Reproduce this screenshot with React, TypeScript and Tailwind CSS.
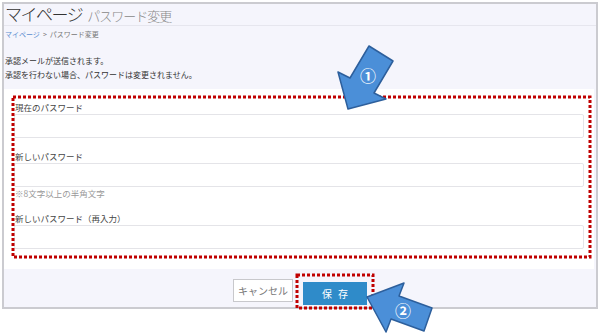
import type { ReactNode } from 'react';

const JP = "font-['Noto_Sans_CJK_JP','Noto_Sans',sans-serif]";

// red dotted annotation frame drawn over its parent
function DottedFrame({ className }: { className: string }) {
  return (
    <svg className={`absolute pointer-events-none overflow-visible ${className}`}>
      <rect x="0" y="0" width="100%" height="100%" fill="none" stroke="#c00000" strokeWidth="3" strokeDasharray="3 2" />
    </svg>
  );
}

function Field({ label, pad, children }: { label: string; pad: string; children?: ReactNode }) {
  return (
    <>
      <div className={`pl-[1px] text-[8.5px] leading-[12px] text-[#444] ${pad}`}>{label}</div>
      <div className="h-[24px] rounded-[2px] border border-[#e4e4e8] bg-white" />
      {children}
    </>
  );
}

export default function App() {
  return (
    <div className={`relative w-[600px] h-[333px] overflow-hidden bg-white ${JP}`}>
      <div className="ml-[2px] mt-[2px] w-[596px] h-[307px] border-2 border-[#cbcbd0] bg-[#f5f5fc] flex flex-col">
        {/* Title */}
        <div className="h-[22px] border-b border-[#e6e6ee] pl-[1px] flex items-baseline gap-[5px]">
          <span className="text-[17px] leading-[19px] tracking-[-1.5px] font-light text-[#333]">マイページ</span>
          <span className="text-[13px] leading-[19px] tracking-[-1px] font-light text-[#888]">パスワード変更</span>
        </div>

        {/* Breadcrumb */}
        <div className="mt-[3px] pl-[1px] text-[7px] leading-[10px] text-[#777]">
          <span className="text-[#5b8ed0]">マイページ</span>
          <span className="mx-[3px]">&gt;</span>
          <span>パスワード変更</span>
        </div>

        <div className="mt-[15px] pl-[1px] text-[8px] leading-[14px] text-[#333]">
          <p>承認メールが送信されます。</p>
          <p>承認を行わない場合、パスワードは変更されません。</p>
        </div>

        {/* Form panel */}
        <div className="mt-[7px] mr-[2px] bg-white pt-[6px] pb-[11px] pl-[7px] pr-[3px]">
          <div className="relative p-[3px]">
            <DottedFrame className="inset-[1.5px] w-[calc(100%-3px)] h-[calc(100%-3px)]" />
            <div className="pr-[4px] pb-[6px] flex flex-col">
              <Field label="現在のパスワード" pad="pt-[3px] pb-[1px]" />
              <Field label="新しいパスワード" pad="pt-[12px] pb-[1px]">
                <div className="pl-[1px] text-[8.5px] leading-[12px] text-[#999]">※8文字以上の半角文字</div>
              </Field>
              <Field label="新しいパスワード（再入力）" pad="pt-[13px] pb-[1px]" />
            </div>
          </div>
        </div>

        {/* Buttons */}
        <div className="pt-[10px] flex justify-center gap-[10px]">
          <button className="w-[60px] h-[23px] border border-[#c8c8cc] bg-white text-[10px] text-[#777]">キャンセル</button>
          <span className="relative">
            <button className="w-[64px] h-[23px] bg-[#2f8bc9] text-[10px] text-white tracking-[6px] pl-[6px]">保存</button>
            <DottedFrame className="-left-[6.5px] -top-[4.5px] w-[76px] h-[33px]" />
          </span>
        </div>
      </div>

      {/* Callout arrows */}
      <svg className="absolute inset-0 pointer-events-none" width="600" height="333">
        <polygon
          points="369,46 393,61 374,93 386,99 348,109 338,72 350,78"
          fill="#4b8fd8"
          stroke="#2d5f9c"
          strokeWidth="1.5"
          strokeLinejoin="round"
        />
        <text x="368" y="75" fill="white" fontSize="16" fontWeight="bold" textAnchor="middle" dominantBaseline="central" fontFamily="Noto Sans CJK JP">①</text>
        <polygon
          points="367,297 404,283 399,296 432,308 424,331 391,319 386,332"
          fill="#4b8fd8"
          stroke="#2d5f9c"
          strokeWidth="1.5"
          strokeLinejoin="round"
        />
        <text x="403" y="310" fill="white" fontSize="16" fontWeight="bold" textAnchor="middle" dominantBaseline="central" fontFamily="Noto Sans CJK JP">②</text>
      </svg>
    </div>
  );
}
